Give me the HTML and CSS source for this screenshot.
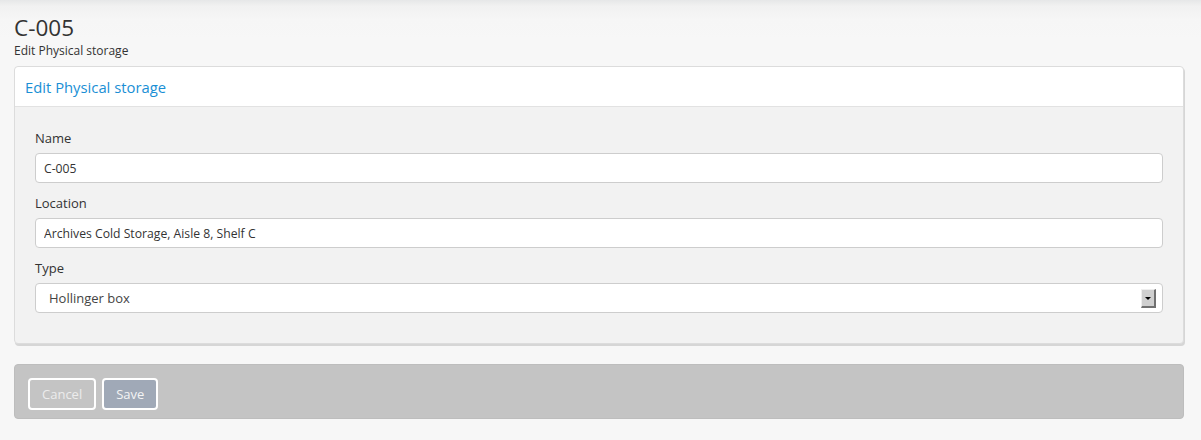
FILE: index.html
```html
<!DOCTYPE html>
<html lang="en">
<head>
  <meta charset="UTF-8">
  <title>C-005 - Edit Physical storage</title>
  <link rel="stylesheet" href="styles.css">
</head>
<body>
  <div class="page">
    <h1>C-005</h1>
    <div class="subtitle">Edit Physical storage</div>

    <form class="panel" id="storageForm">
      <div class="panel-heading">Edit Physical storage</div>
      <div class="panel-body">
        <div class="field">
          <label for="name">Name</label>
          <input type="text" id="name" value="C-005">
        </div>
        <div class="field">
          <label for="location">Location</label>
          <input type="text" id="location" value="Archives Cold Storage, Aisle 8, Shelf C">
        </div>
        <div class="field">
          <label for="type">Type</label>
          <div class="select">
            <span class="select-value" id="type">Hollinger box</span>
            <span class="select-arrow"></span>
          </div>
        </div>
      </div>
    </form>

    <div class="actions">
      <button type="button" class="btn btn-cancel">Cancel</button>
      <button type="button" class="btn btn-save">Save</button>
    </div>
  </div>
</body>
</html>
```

FILE: styles.css
```css
html, body {
  margin: 0;
  height: 100%;
}
body {
  font-family: "Open Sans", "Liberation Sans", sans-serif;
  background: linear-gradient(to bottom, #e6e7e8 0, #f1f1f1 6px, #f6f6f6 20px, #f7f7f7 40px);
  color: #333;
}
.page {
  padding: 12px 17px 0 14px;
}
h1 {
  margin: 0;
  font-size: 22.5px;
  font-weight: normal;
  line-height: 31px;
  color: #333;
}
.subtitle {
  font-size: 12px;
  line-height: 16px;
  color: #333;
}
.panel {
  margin-top: 7px;
  background: #f2f2f2;
  border: 1px solid #dcdcdc;
  border-radius: 4px;
  box-shadow: 1px 2px 0 #d6d6d6;
}
.panel-heading {
  background: #fff;
  border-bottom: 1px solid #e2e2e2;
  border-radius: 4px 4px 0 0;
  height: 39px;
  line-height: 40px;
  padding-left: 10px;
  font-size: 14.8px;
  color: #1a8fd5;
}
.panel-body {
  padding: 19px 20px 30px 20px;
}
.field {
  margin-bottom: 8px;
}
.field:last-child {
  margin-bottom: 0;
}
label {
  display: block;
  font-size: 13px;
  line-height: 24px;
  margin-bottom: 3px;
  color: #333;
}
input[type="text"], .select {
  box-sizing: border-box;
  width: 100%;
  height: 30px;
  padding: 0 8px;
  font-family: inherit;
  font-size: 12.2px;
  color: #333;
  background: #fff;
  border: 1px solid #cdcdcd;
  border-radius: 4px;
  outline: none;
}
.select {
  display: flex;
  align-items: center;
  justify-content: space-between;
  padding: 0 6px 0 13px;
  font-size: 13px;
  color: #444;
}
.select-arrow {
  position: relative;
  width: 12px;
  height: 16px;
  background: #cfcfcf;
  border-right: 2px solid #707070;
  border-bottom: 2px solid #707070;
  border-top: 1px solid #eee;
  border-left: 1px solid #eee;
}
.select-arrow::after {
  content: "";
  position: absolute;
  left: 3px;
  top: 7px;
  border-left: 3px solid transparent;
  border-right: 3px solid transparent;
  border-top: 3px solid #000;
}
.actions {
  margin-top: 20px;
  background: #c4c4c4;
  border: 1px solid #bdbdbd;
  border-radius: 4px;
  padding: 13px 13px 8px;
  display: flex;
  gap: 6px;
}
.btn {
  font-family: inherit;
  font-size: 13px;
  height: 32px;
  padding: 0 12px;
  border: 2px solid #fff;
  border-radius: 4px;
  cursor: pointer;
}
.btn-cancel {
  background: transparent;
  color: #ececec;
}
.btn-save {
  background: #a0a9b7;
  color: #f4f4f4;
}
```
